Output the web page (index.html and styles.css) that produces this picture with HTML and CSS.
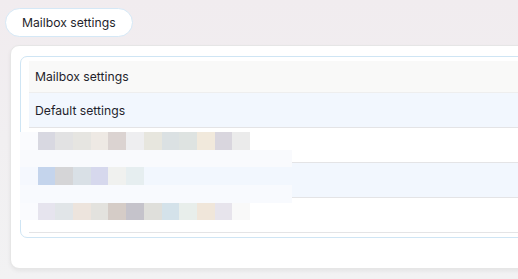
FILE: index.html
```html
<!DOCTYPE html>
<html lang="en">
<head>
  <meta charset="UTF-8">
  <title>Mailbox settings</title>
  <link rel="stylesheet" href="styles.css">
</head>
<body>
  <div class="page">
    <!-- Tab pill -->
    <div class="tab">Mailbox settings</div>

    <!-- Settings card -->
    <div class="card">
      <div class="panel">
        <div class="table">
          <div class="row row-head">Mailbox settings</div>
          <div class="row row-active">Default settings</div>
          <div class="row"></div>
          <div class="row row-alt"></div>
          <div class="row"></div>

          <!-- Redacted entries -->
          <div class="mosaic" id="mosaic"></div>
        </div>
      </div>
    </div>
  </div>

  <script>
    // Pixel blocks of the blurred rows
    const rows = [
      ['#fafbfe', '#d8d8e1', '#e2e2e3', '#e6e5e1', '#eee9e4', '#dbd3d1', '#eeeef0', '#e7e6de', '#dbe1e3', '#dee3e1', '#f1e9dc', '#d9d6de', '#ebebeb'],
      ['wide:#f9fafd'],
      ['#f5f8fe', '#c4d4ec', '#d5d5d7', '#d9e0e6', '#d6d8ed', '#f0f1ef', '#e6eef0'],
      ['wide:#f8fafe'],
      ['#fafbfe', '#e6e4ee', '#e1e5e8', '#ede4dd', '#e3e2de', '#d5ccc7', '#c5c3cb', '#dfdfdb', '#d4e2ea', '#e8eeeb', '#f0e6da', '#e7e4ec', '#f9f9f9']
    ];

    const mosaic = document.getElementById('mosaic');
    rows.forEach(cells => {
      const line = document.createElement('div');
      line.className = 'mosaic-row';
      cells.forEach(color => {
        const cell = document.createElement('span');
        if (color.startsWith('wide:')) {
          cell.className = 'cell cell-wide';
          color = color.slice(5);
        } else {
          cell.className = 'cell';
        }
        cell.style.background = color;
        line.appendChild(cell);
      });
      mosaic.appendChild(line);
    });
  </script>
</body>
</html>
```

FILE: styles.css
```css
/* Page */
html, body {
  margin: 0;
  height: 100%;
  overflow: hidden;
}
body {
  font-family: Inter, "Noto Sans", sans-serif;
  font-size: 12.2px;
  color: #1f1f2c;
  background: linear-gradient(180deg, #f1ecef 0%, #f1eff1 50%, #f2f2f3 100%);
}
.page {
  padding: 8px 0 0 5px;
}

/* Tab pill */
.tab {
  display: inline-flex;
  align-items: center;
  height: 27px;
  padding: 0 16px;
  background: #fff;
  border: 1px solid #d5e8f6;
  border-radius: 15px;
}

/* Card */
.card {
  width: 560px;
  margin: 8px 0 0 5px;
  padding: 10px 0 30px 9px;
  background: #fff;
  border: 1px solid #e6e6e6;
  border-radius: 9px;
  box-shadow: 0 2px 4px rgba(0, 0, 0, 0.06);
}
.panel {
  padding: 4px 0 4px 8px;
  border: 1px solid #cfe5f4;
  border-radius: 7px;
}

/* Rows */
.table {
  position: relative;
}
.row {
  display: flex;
  align-items: center;
  height: 34px;
  padding-left: 6px;
  border-bottom: 1px solid #e4e4e6;
}
.row-head {
  height: 31px;
  background: #f9f9f8;
  border-bottom-color: #eeeeee;
}
.row-active,
.row-alt {
  background: #f2f7fe;
}

/* Blurred entries */
.mosaic {
  position: absolute;
  left: -9px;
  top: 71px;
}
.mosaic-row {
  display: flex;
  height: 17.7px;
}
.cell {
  width: 17.7px;
  height: 100%;
}
.cell-wide {
  width: 272px;
}
```
